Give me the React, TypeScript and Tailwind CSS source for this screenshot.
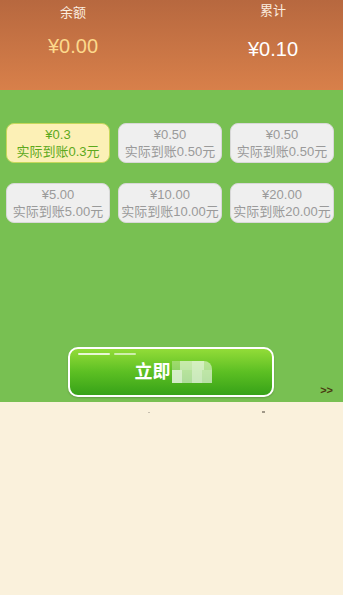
const cards = [
  { price: "¥0.3", note: "实际到账0.3元", active: true },
  { price: "¥0.50", note: "实际到账0.50元" },
  { price: "¥0.50", note: "实际到账0.50元" },
  { price: "¥5.00", note: "实际到账5.00元" },
  { price: "¥10.00", note: "实际到账10.00元" },
  { price: "¥20.00", note: "实际到账20.00元" },
];

export default function App() {
  return (
    <div
      className="w-[343px] h-[595px] flex flex-col bg-[#faf1dc] overflow-hidden"
      style={{ fontFamily: '"Liberation Sans", "Noto Sans CJK SC", sans-serif' }}
    >
      {/* header */}
      <div className="h-[90px] bg-gradient-to-b from-[#b7683f] to-[#d8804a] flex">
        <div className="w-[146px] flex flex-col items-center">
          <div className="mt-[4px] text-[13px] leading-[17px] text-[#fbeee0]">余额</div>
          <div className="mt-[13px] text-[20px] leading-[24px] text-[#fcd98c]">¥0.00</div>
        </div>
        <div className="flex-1" />
        <div className="w-[140px] flex flex-col items-center">
          <div className="mt-[2px] text-[13px] leading-[17px] text-[#fbeee0]">累计</div>
          <div className="mt-[18px] text-[20px] leading-[24px] text-white">¥0.10</div>
        </div>
      </div>

      {/* green body */}
      <div className="h-[312px] bg-[#78c052] flex flex-col">
        <div className="mt-[33px] ml-[6px] w-[328px] grid grid-cols-3 gap-x-[8px] gap-y-[20px]">
          {cards.map((c, i) => (
            <div
              key={i}
              className={
                c.active
                  ? "h-[40px] rounded-[8px] border-[1.5px] border-[#c6d85a] bg-[#fcf0b6] flex flex-col items-center justify-center text-[#5ca91c]"
                  : "h-[40px] rounded-[8px] border border-[#d8d8d8] bg-[#efefef] flex flex-col items-center justify-center text-[#9a9a9a]"
              }
            >
              <div className="text-[13px] leading-[17px]">{c.price}</div>
              <div className="text-[13px] leading-[17px] whitespace-nowrap">{c.note}</div>
            </div>
          ))}
        </div>

        <div className="mt-auto mb-[5px] flex items-end">
          <div className="ml-[68px] w-[206px] h-[50px] rounded-[10px] border-2 border-white bg-gradient-to-b from-[#92dc38] via-[#5cbf23] to-[#36a218] shadow-[0_1px_2px_rgba(0,0,0,0.2)] relative flex items-center justify-center">
            <div className="absolute left-[8px] top-[4px] w-[32px] h-[2px] rounded-full bg-white/80" />
            <div className="absolute left-[44px] top-[4px] w-[22px] h-[2px] rounded-full bg-white/60" />
            <div className="flex items-center pl-[4px]">
              <span className="text-[18px] font-bold text-white leading-[22px]">立即</span>
              <div className="ml-[1px] flex flex-col">
                <div className="flex">
                  <div className="w-[8px] h-[9px] bg-white/30" />
                  <div className="w-[12px] h-[9px] bg-white/60" />
                  <div className="w-[12px] h-[9px] bg-white/70" />
                  <div className="w-[8px] h-[9px] bg-white/50 rounded-tr-[8px]" />
                </div>
                <div className="flex">
                  <div className="w-[10px] h-[13px] bg-white/75" />
                  <div className="w-[10px] h-[13px] bg-white/55" />
                  <div className="w-[10px] h-[13px] bg-white/70" />
                  <div className="w-[10px] h-[13px] bg-white/60" />
                </div>
              </div>
            </div>
          </div>
          <div className="ml-auto mr-[10px] mb-[1px] text-[11px] font-bold leading-[12px] text-[#4a3a10]">&gt;&gt;</div>
        </div>
      </div>

      <div className="flex-1 relative">
        <div className="absolute left-[148px] top-[10px] w-[2px] h-[1px] bg-[#c8c0b0]" />
        <div className="absolute left-[262px] top-[9px] w-[3px] h-[2px] bg-[#a09888]" />
      </div>
    </div>
  );
}
